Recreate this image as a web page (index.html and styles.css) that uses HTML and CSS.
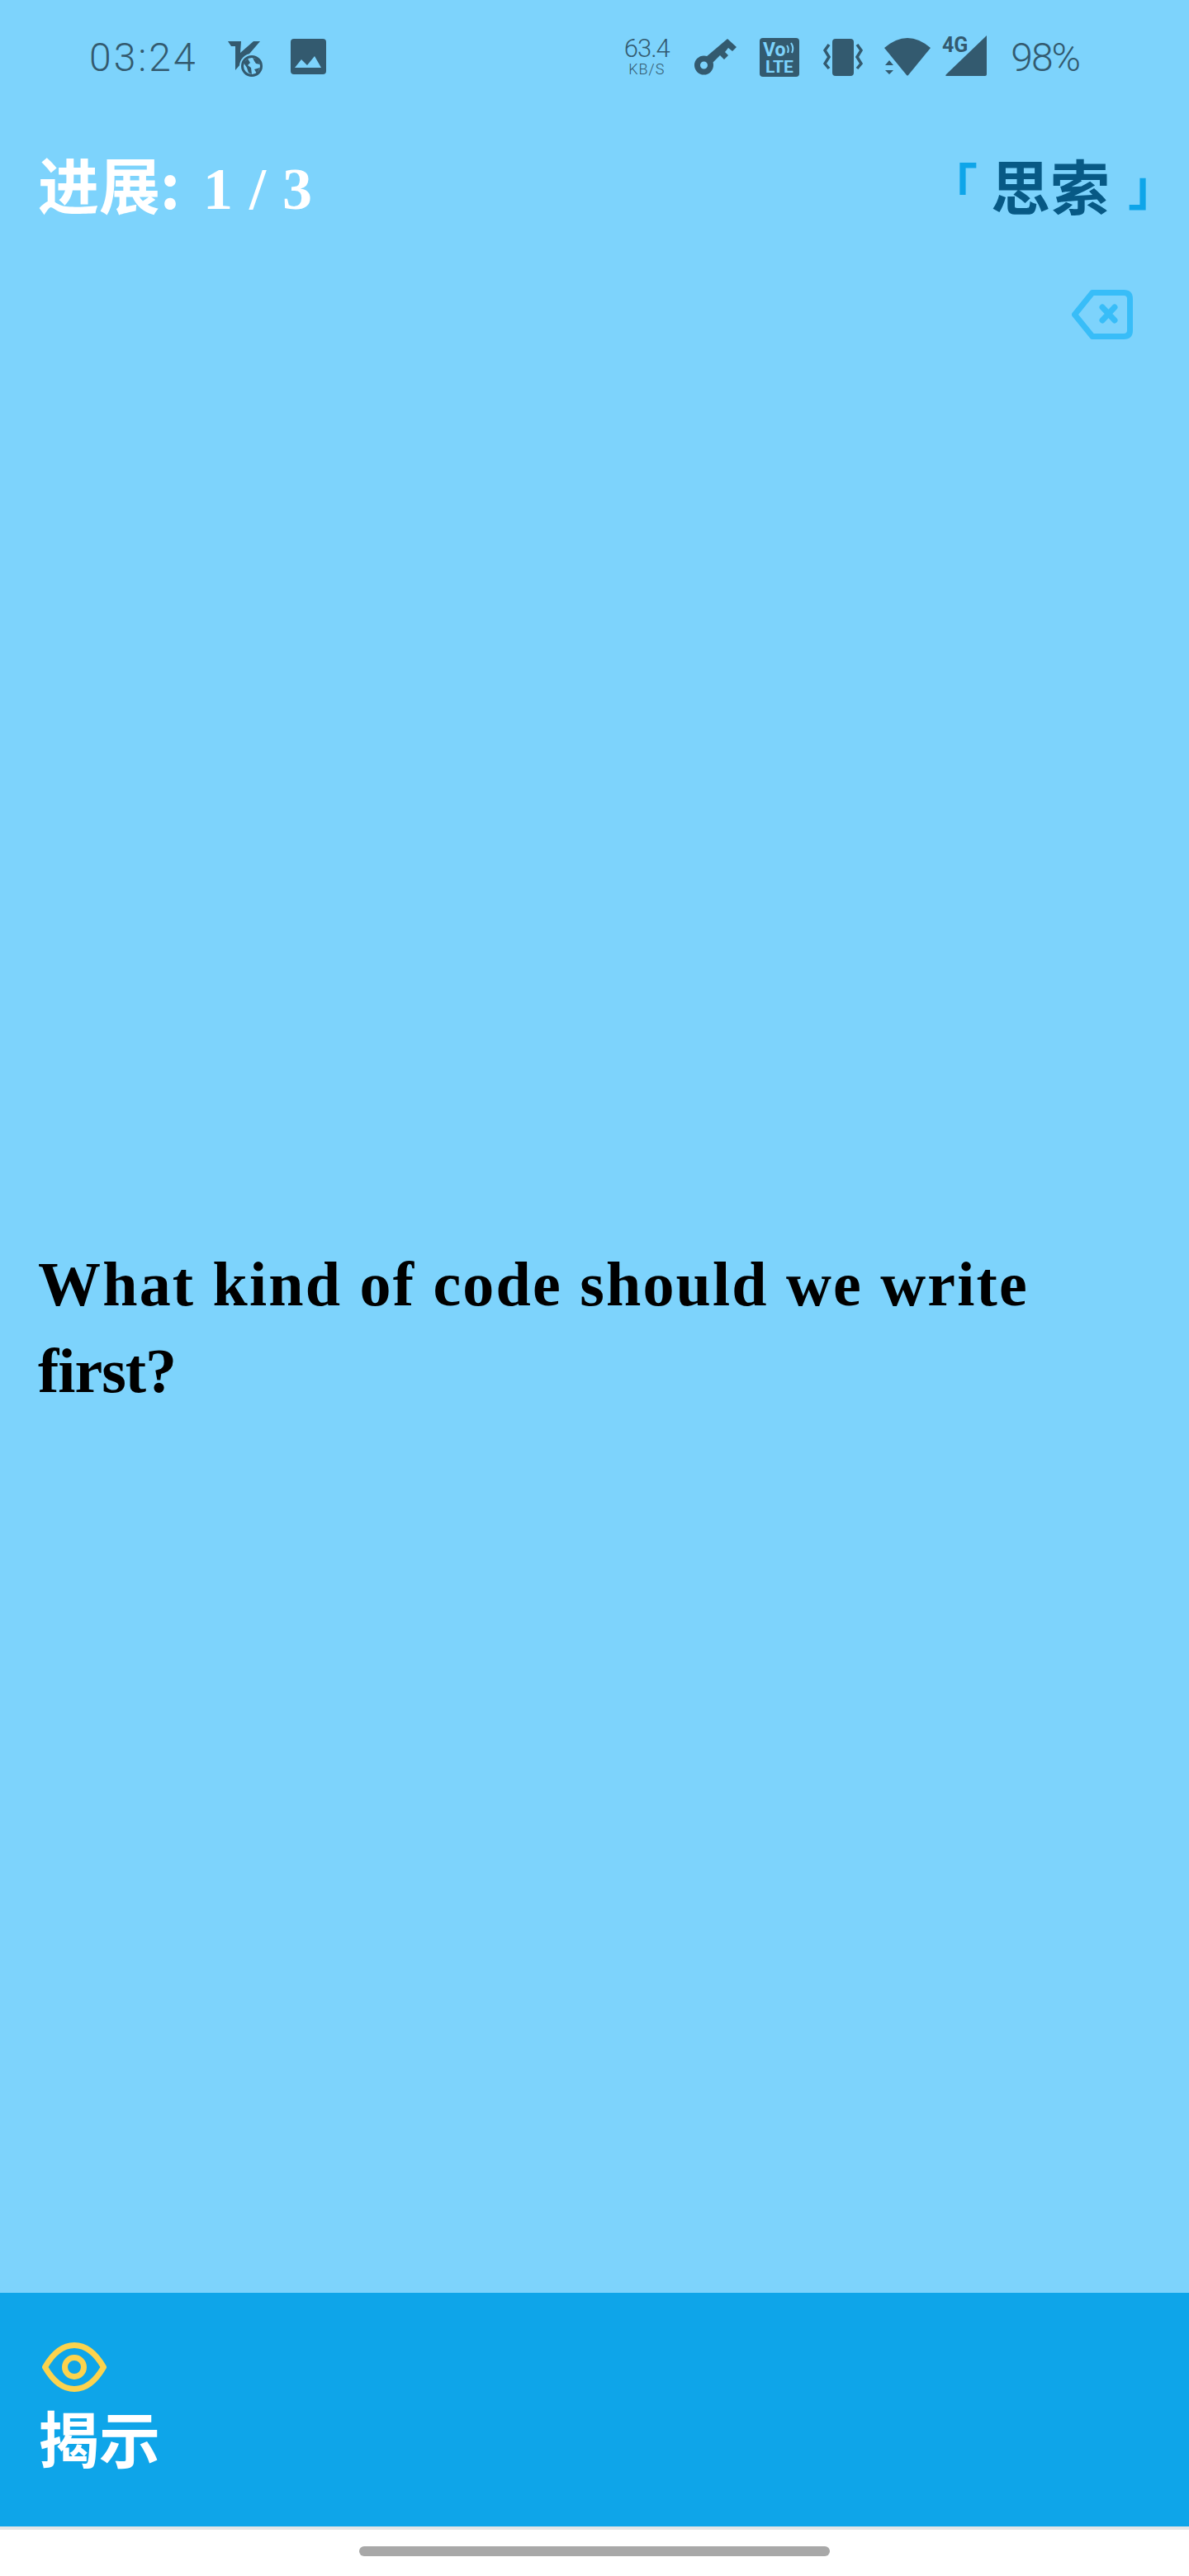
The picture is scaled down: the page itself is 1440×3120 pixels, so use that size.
FILE: index.html
```html
<!DOCTYPE html>
<html lang="en">
<head>
  <meta charset="UTF-8">
  <meta name="viewport" content="width=device-width, initial-scale=1.0">
  <title>Review</title>
  <link rel="stylesheet" href="styles.css">
</head>
<body>
  <div class="screen">
    <!-- Status bar -->
    <div class="status-bar">
      <div class="status-left">
        <span class="time">03:24</span>
        <svg class="icon-vpn" viewBox="0 0 42 45">
          <path d="M0 1H16L15 15L31 1H39L9 36V7H4Z" fill="#335a6f"/>
          <circle cx="29" cy="31" r="15" fill="#7dd3fc"/>
          <circle cx="29" cy="31" r="11.500" fill="none" stroke="#335a6f" stroke-width="3"/>
          <path d="M19 27L24 22L27 27L24 30L28 33L29 41L25 39L23 33ZM30 21L36 23L39 29L34 28L32 25ZM32 35L39 33L35 40Z" fill="#335a6f"/>
        </svg>
        <svg class="icon-image" viewBox="0 0 43 43">
          <rect width="43" height="43" rx="4" fill="#335a6f"/>
          <path d="M5 35L13 25L20 32L29 21L37 35Z" fill="#7dd3fc"/>
        </svg>
      </div>
      <div class="status-right">
        <div class="speed">
          <span class="speed-value">63.4</span>
          <span class="speed-unit">KB/S</span>
        </div>
        <svg class="icon-key" viewBox="0 0 51 44">
          <circle cx="11.500" cy="32" r="8" fill="none" stroke="#335a6f" stroke-width="7"/>
          <path d="M14 22L40 0L51 10L46 15L41 11L37 16L41 20L36 25L31 20L21 30Z" fill="#335a6f"/>
        </svg>
        <svg class="icon-volte" viewBox="0 0 48 47">
          <rect width="48" height="47" rx="4" fill="#335a6f"/>
          <text x="4" y="22" class="volte-vo">Vo</text>
          <path d="M33 9Q36 13 34 18M38 6Q42 12 39 18" fill="none" stroke="#7dd3fc" stroke-width="2"/>
          <text x="24" y="42" text-anchor="middle" class="volte-lte">LTE</text>
        </svg>
        <svg class="icon-vibrate" viewBox="0 0 48 45">
          <rect x="11" width="26" height="45" rx="4" fill="#335a6f"/>
          <path d="M7 7L2 14L7 22L2 30L7 36M41 7L46 14L41 22L46 30L41 36" fill="none" stroke="#335a6f" stroke-width="3.500"/>
        </svg>
        <svg class="icon-wifi" viewBox="0 0 56 46">
          <path d="M0 12Q28 -12 56 12L29 45Q28 46 27 45Z" fill="#335a6f"/>
          <path d="M6 27L11 33H1ZM1 39H11L6 44Z" fill="#335a6f"/>
        </svg>
        <svg class="icon-signal" viewBox="0 0 54 49">
          <path d="M54 0V47Q54 49 52 49H6Q3 49 5 47Z" fill="#335a6f"/>
          <text x="0" y="20" class="signal-4g">4G</text>
        </svg>
        <span class="battery">98%</span>
      </div>
    </div>

    <!-- Progress row -->
    <div class="progress-row">
      <div class="progress">
        <span class="progress-label">进展:</span>
        <span class="progress-count">1 / 3</span>
      </div>
      <div class="stage">
        <span class="stage-mark stage-open">「</span>
        <span class="stage-name">思索</span>
        <span class="stage-mark stage-close">」</span>
      </div>
    </div>

    <div class="tools">
      <svg class="icon-delete" viewBox="0 0 74 60">
        <path d="M25 3.500H63Q70.500 3.500 70.500 11V49Q70.500 56.500 63 56.500H25L3.500 30Z" fill="none" stroke="#38bdf8" stroke-width="7" stroke-linejoin="round"/>
        <path d="M37 21L52 37M52 21L37 37" fill="none" stroke="#38bdf8" stroke-width="7" stroke-linecap="round"/>
      </svg>
    </div>

    <!-- Question -->
    <main class="question-area">
      <p class="question">What kind of code should we write <span class="question-tail">first?</span></p>
    </main>

    <!-- Reveal button -->
    <footer class="reveal">
      <svg class="icon-eye" viewBox="0 0 78 60">
        <path d="M3.500 30C15 10 28 3.500 39 3.500C50 3.500 63 10 74.500 30C63 50 50 56.500 39 56.500C28 56.500 15 50 3.500 30Z" fill="none" stroke="#fcd34d" stroke-width="7" stroke-linejoin="round"/>
        <circle cx="39" cy="30" r="11.500" fill="none" stroke="#fcd34d" stroke-width="7"/>
      </svg>
      <div class="reveal-label">揭示</div>
    </footer>

    <div class="nav-bar">
      <div class="nav-pill"></div>
    </div>
  </div>
</body>
</html>
```

FILE: styles.css
```css
/* Page */
body {
  margin: 0;
  background-color: #fff;
}

.screen {
  width: 1440px;
  height: 3120px;
  display: flex;
  flex-direction: column;
  background-color: #7dd3fc;
  font-family: "Liberation Serif", "Noto Sans CJK SC", serif;
}

/* Status bar */
.status-bar {
  height: 138px;
  flex-shrink: 0;
  display: flex;
  justify-content: space-between;
  align-items: center;
  padding: 0 133px 0 108px;
  color: #335a6f;
  font-family: Roboto, sans-serif;
  font-weight: 300;
}

.status-left,
.status-right {
  display: flex;
  align-items: center;
}

.time {
  font-size: 48px;
  width: 130px;
  letter-spacing: 3px;
  white-space: nowrap;
}

.icon-vpn {
  width: 42px;
  height: 45px;
  margin-left: 38px;
  margin-top: 5px;
}

.icon-image {
  width: 43px;
  height: 43px;
  margin-left: 34px;
  margin-top: -2px;
}

.speed {
  width: 56px;
  display: flex;
  flex-direction: column;
  align-items: center;
  margin-right: 30px;
}

.speed-value {
  font-size: 31px;
  line-height: 30px;
  letter-spacing: -1px;
}

.speed-unit {
  font-size: 18px;
  line-height: 20px;
  letter-spacing: 1px;
  white-space: nowrap;
}

.icon-key {
  width: 51px;
  height: 44px;
  margin-right: 28px;
}

.icon-volte {
  width: 48px;
  height: 47px;
  margin-right: 29px;
}

.volte-vo,
.volte-lte {
  fill: #7dd3fc;
  font-family: Roboto, sans-serif;
  font-weight: 700;
}

.volte-vo {
  font-size: 23px;
}

.volte-lte {
  font-size: 21px;
}

.icon-vibrate {
  width: 48px;
  height: 45px;
  margin-right: 26px;
}

.icon-wifi {
  width: 56px;
  height: 46px;
  margin-right: 14px;
}

.icon-signal {
  width: 54px;
  height: 49px;
  margin-right: 29px;
  margin-top: -3px;
  overflow: visible;
}

.signal-4g {
  fill: #335a6f;
  font-family: Roboto, sans-serif;
  font-size: 25px;
  font-weight: 700;
}

.battery {
  font-size: 48px;
  letter-spacing: -2px;
  white-space: nowrap;
}

/* Progress row */
.progress-row {
  height: 90px;
  margin-top: 40px;
  flex-shrink: 0;
  display: flex;
  justify-content: space-between;
  align-items: center;
  padding: 0 14px 0 46px;
}

.progress {
  display: flex;
  align-items: baseline;
  color: #fff;
  font-weight: 700;
}

.progress-label {
  font-family: "Noto Sans CJK SC", sans-serif;
  font-size: 74px;
  line-height: 90px;
}

.progress-count {
  font-size: 72px;
  letter-spacing: 1px;
  margin-left: 28px;
}

.stage {
  display: flex;
  align-items: center;
  font-family: "Noto Sans CJK SC", sans-serif;
  font-size: 72px;
  font-weight: 700;
  line-height: 90px;
}

.stage-mark {
  color: #0ea5e9;
  font-size: 60px;
}

.stage-name {
  color: #075985;
  margin: 0 22px 0 16px;
}

/* Delete icon */
.tools {
  height: 60px;
  margin-top: 83px;
  flex-shrink: 0;
  display: flex;
  justify-content: flex-end;
  padding-right: 68px;
}

.icon-delete {
  width: 74px;
  height: 60px;
}

/* Question */
.question-area {
  flex: 1;
  display: flex;
  align-items: center;
  padding: 28px 46px 0;
}

.question {
  margin: 0;
  color: #000;
  font-size: 76px;
  font-weight: 700;
  line-height: 105px;
  letter-spacing: 2.2px;
}

.question-tail {
  letter-spacing: -1px;
}

/* Reveal button */
.reveal {
  height: 283px;
  flex-shrink: 0;
  box-sizing: border-box;
  padding: 60px 46px 0;
  background-color: #0ea5e9;
}

.icon-eye {
  display: block;
  width: 78px;
  height: 60px;
  margin-left: 5px;
}

.reveal-label {
  margin-top: 9px;
  color: #fff;
  font-family: "Noto Sans CJK SC", sans-serif;
  font-size: 74px;
  font-weight: 700;
  line-height: 90px;
}

/* Navigation bar */
.nav-bar {
  height: 60px;
  flex-shrink: 0;
  box-sizing: border-box;
  border-top: 4px solid #e2e6e8;
  background-color: #fff;
  display: flex;
  justify-content: center;
  padding-top: 20px;
}

.nav-pill {
  width: 570px;
  height: 12px;
  border-radius: 6px;
  background-color: #a8a8a8;
}
```
